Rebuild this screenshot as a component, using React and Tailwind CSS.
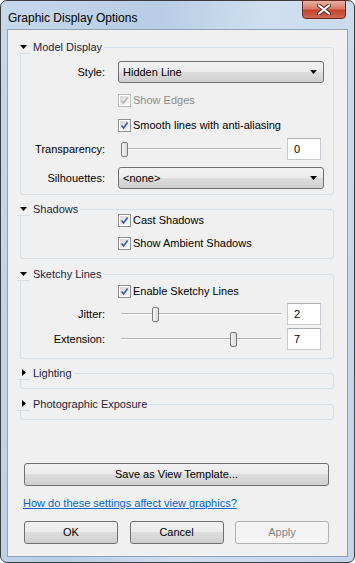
import React from 'react';

const Check = ({ label, disabled }) => (
  <div className="flex items-center h-[13px] ml-[97px]">
    <span
      className={`w-[13px] h-[13px] border ${disabled ? 'border-[#bcbcbc]' : 'border-[#8e8f8f]'} p-[1px] bg-white shrink-0`}
    >
      <span className="relative block w-full h-full bg-gradient-to-br from-[#d6d6d6] to-[#fbfbfb]">
        <svg viewBox="0 0 9 9" className="absolute inset-0 w-[9px] h-[9px]">
          <path
            d="M1.5 4.5 L3.6 7 L7.6 1.5"
            fill="none"
            stroke={disabled ? '#b4b4b4' : '#3f55a0'}
            strokeWidth="1.6"
          />
        </svg>
      </span>
    </span>
    <span className={`ml-[2px] leading-none ${disabled ? 'text-[#8d8d8d]' : 'text-black'}`}>{label}</span>
  </div>
);

const Dropdown = ({ value }) => (
  <div className="flex items-center w-[206px] h-[22px] rounded-[3px] border border-[#707070] bg-[linear-gradient(#f2f2f2_0%,#ebebeb_50%,#dddddd_50%,#cfcfcf_100%)] pl-[4px] pr-[6px]">
    <span className="flex-1">{value}</span>
    <svg viewBox="0 0 7 4" className="w-[7px] h-[4px]">
      <path d="M0 0 H7 L3.5 4 Z" fill="#000" />
    </svg>
  </div>
);

const Slider = ({ value }) => (
  <div className="relative w-[162px] h-[22px]">
    <div className="absolute left-0 right-[2px] top-[10px] h-[2px] border-t border-[#b5b5b5] border-b border-b-white" />
    <div
      className="absolute top-[4px] w-[7px] h-[15px] rounded-[2px] border border-[#7a7a7a] bg-gradient-to-r from-[#f4f4f4] to-[#d9d9d9]"
      style={{ left: value * 15.5 }}
    />
  </div>
);

const NumBox = ({ value }) => (
  <div className="w-[34px] h-[22px] border border-[#c5c9d0] border-t-[#abadb3] bg-white pl-[6px] flex items-center">
    {value}
  </div>
);

const Row = ({ label, children, className = '' }) => (
  <div className={`flex items-center ${className}`}>
    <span className="w-[84px] text-right shrink-0">{label}</span>
    {children}
  </div>
);

const Group = ({ title, open, className = '', children }) => (
  <fieldset className={`border border-[#d5dfe5] rounded-[3px] px-0 ${className}`}>
    <legend className="-ml-[4px] h-[12px] flex items-center pr-[2px]">
      <span className="w-[13px] h-[13px] flex items-center justify-center border-b border-[#d5dfe5] bg-[#f0f0f0]">
        {open ? (
          <svg viewBox="0 0 7 4" className="w-[7px] h-[4px]">
            <path d="M0 0 H7 L3.5 4 Z" fill="#000" />
          </svg>
        ) : (
          <svg viewBox="0 0 4 7" className="w-[4px] h-[7px]">
            <path d="M0 0 V7 L4 3.5 Z" fill="#000" />
          </svg>
        )}
      </span>
      <span className="ml-[3px] text-[#1e1e3c]">{title}</span>
    </legend>
    {children}
  </fieldset>
);

const Button = ({ children, disabled, className = '' }) => (
  <div
    className={`h-[23px] flex items-center justify-center rounded-[3px] border ${
      disabled
        ? 'border-[#adb2b5] bg-[#f4f4f4] text-[#838383]'
        : 'border-[#707070] bg-[linear-gradient(#f2f2f2_0%,#ebebeb_50%,#dddddd_50%,#cfcfcf_100%)] text-black'
    } ${className}`}
  >
    {children}
  </div>
);

export default function App() {
  return (
    <div className="w-[355px] h-[563px] font-['Liberation_Sans',Arial,sans-serif] text-[11px] text-black">
      <div className="relative w-full h-full rounded-[7px] border border-[#3d3d3d] bg-[linear-gradient(100deg,#c6d8ec_0%,#b7cde5_35%,#cfdff0_60%,#c2d5ea_100%)] px-[6px] pt-[28px] pb-[5px] flex flex-col">
        {/* title bar */}
        <div className="absolute left-[7px] top-[8px] text-[12px] text-black">Graphic Display Options</div>
        <div className="absolute right-[8px] top-[-1px] w-[44px] h-[19px] rounded-b-[4px] border border-[#6e2a20] bg-[linear-gradient(#eab1a2_0%,#d97a66_45%,#c6442c_55%,#cd6a50_100%)] flex items-center justify-center">
          <svg viewBox="0 0 14 11" className="w-[14px] h-[11px]">
            <path d="M2 1.5 L12 9.5 M12 1.5 L2 9.5" stroke="#4a2a26" strokeWidth="4" strokeLinecap="round" />
            <path d="M2 1.5 L12 9.5 M12 1.5 L2 9.5" stroke="#ffffff" strokeWidth="2.2" strokeLinecap="round" />
          </svg>
        </div>

        {/* client area */}
        <div className="flex-1 border border-[#8ea2b8] bg-[#f0f0f0] pl-[12px] pr-[13px] pt-[11px] flex flex-col">
          <Group title="Model Display" open className="pb-[5px]">
            <Row label="Style:" className="mt-[8px]">
              <span className="ml-[13px]">
                <Dropdown value="Hidden Line" />
              </span>
            </Row>
            <div className="mt-[11px]">
              <Check label="Show Edges" disabled />
            </div>
            <div className="mt-[12px]">
              <Check label="Smooth lines with anti-aliasing" />
            </div>
            <Row label="Transparency:" className="mt-[6px]">
              <span className="ml-[16px]">
                <Slider value={0} />
              </span>
              <span className="ml-[4px]">
                <NumBox value="0" />
              </span>
            </Row>
            <Row label="Silhouettes:" className="mt-[7px]">
              <span className="ml-[13px]">
                <Dropdown value="<none>" />
              </span>
            </Row>
          </Group>

          <Group title="Shadows" open className="mt-[8px] pb-[8px]">
            <div className="-mt-[1px]">
              <Check label="Cast Shadows" />
            </div>
            <div className="mt-[10px]">
              <Check label="Show Ambient Shadows" />
            </div>
          </Group>

          <Group title="Sketchy Lines" open className="mt-[9px] pb-[8px]">
            <div className="mt-[5px]">
              <Check label="Enable Sketchy Lines" />
            </div>
            <Row label="Jitter:" className="mt-[5px]">
              <span className="ml-[16px]">
                <Slider value={2} />
              </span>
              <span className="ml-[4px]">
                <NumBox value="2" />
              </span>
            </Row>
            <Row label="Extension:" className="mt-[3px]">
              <span className="ml-[16px]">
                <Slider value={7} />
              </span>
              <span className="ml-[4px]">
                <NumBox value="7" />
              </span>
            </Row>
          </Group>

          <Group title="Lighting" className="mt-[8px] h-[22px]" />
          <Group title="Photographic Exposure" className="mt-[9px] h-[22px]" />

          <div className="mt-[43px] pl-[4px] pr-[5px]">
            <Button>Save as View Template...</Button>
          </div>
          <a className="mt-[10px] ml-[3px] text-[#0066cc] underline leading-[14px] self-start">
            How do these settings affect view graphics?
          </a>
          <div className="mt-[11px] pl-[4px] pr-[5px] flex justify-between">
            <Button className="w-[94px]">OK</Button>
            <Button className="w-[94px]">Cancel</Button>
            <Button className="w-[94px]" disabled>
              Apply
            </Button>
          </div>
        </div>
      </div>
    </div>
  );
}
